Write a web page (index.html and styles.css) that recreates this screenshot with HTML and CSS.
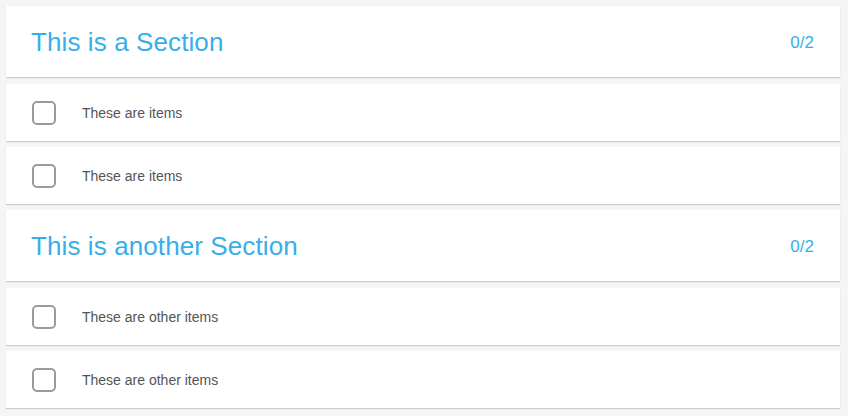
FILE: index.html
```html
<!DOCTYPE html>
<html>
<head>
<meta charset="utf-8">
<link rel="stylesheet" href="styles.css">
</head>
<body>
<div class="list">
  <div class="card section">
    <span class="title">This is a Section</span>
    <span class="count">0/2</span>
  </div>
  <div class="card item">
    <span class="check"></span>
    <span class="label">These are items</span>
  </div>
  <div class="card item">
    <span class="check"></span>
    <span class="label">These are items</span>
  </div>
  <div class="card section">
    <span class="title">This is another Section</span>
    <span class="count">0/2</span>
  </div>
  <div class="card item">
    <span class="check"></span>
    <span class="label">These are other items</span>
  </div>
  <div class="card item">
    <span class="check"></span>
    <span class="label">These are other items</span>
  </div>
</div>
</body>
</html>
```
FILE: styles.css
```css
html, body {
  margin: 0;
  padding: 0;
  background: #f4f5f7;
  font-family: "Liberation Sans", Arial, sans-serif;
}
.list {
  display: flex;
  flex-direction: column;
  padding: 6px 8px 0 6px;
}
.card {
  background: #fff;
  box-shadow: 0 1px 1px rgba(0, 0, 0, 0.16);
  display: flex;
  align-items: center;
  box-sizing: border-box;
}
.section {
  height: 71px;
  padding: 2px 26px 0 25px;
  justify-content: space-between;
  margin-bottom: 7px;
}
.item {
  height: 57px;
  padding: 0 0 0 26px;
  margin-bottom: 6px;
}
.title {
  color: #37aeea;
  font-size: 26px;
  letter-spacing: 0.1px;
}
.count {
  color: #37aeea;
  font-size: 17px;
}
.check {
  width: 24px;
  height: 24px;
  box-sizing: border-box;
  border: 2px solid #9b9b9b;
  border-radius: 5px;
  margin-right: 26px;
}
.label {
  color: #555;
  font-size: 14px;
}
```
